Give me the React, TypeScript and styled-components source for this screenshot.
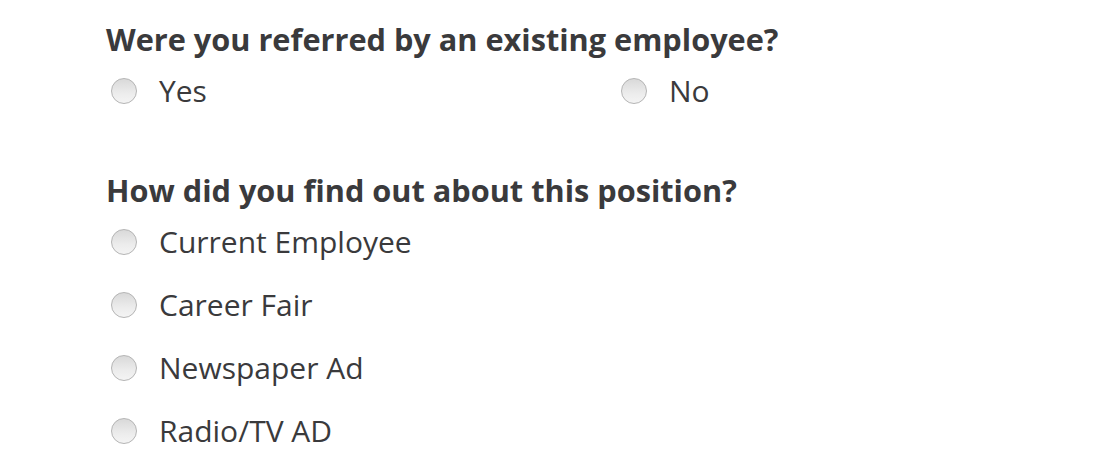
import styled, { createGlobalStyle } from "styled-components";

const GlobalStyle = createGlobalStyle`
  body {
    margin: 0;
    background: #fff;
    font-family: "Open Sans", "Noto Sans", sans-serif;
    color: #3a3a3c;
  }
`;

const referralOptions = ["Yes", "No"];
const sourceOptions = [
  "Current Employee",
  "Career Fair",
  "Newspaper Ad",
  "Radio/TV AD",
];

export default function App() {
  return (
    <>
      <GlobalStyle />
      <Form>
        <Question>
          <Heading>Were you referred by an existing employee?</Heading>
          <InlineOptions>
            {referralOptions.map((opt) => (
              <Option key={opt}>
                <Radio type="radio" name="referred" />
                <Label>{opt}</Label>
              </Option>
            ))}
          </InlineOptions>
        </Question>
        <Question>
          <Heading>How did you find out about this position?</Heading>
          <StackedOptions>
            {sourceOptions.map((opt) => (
              <Option key={opt}>
                <Radio type="radio" name="source" />
                <Label>{opt}</Label>
              </Option>
            ))}
          </StackedOptions>
        </Question>
      </Form>
    </>
  );
}

const Form = styled.form`
  display: flex;
  flex-direction: column;
  gap: 57px;
  padding: 19px 0 0 106px;
`;

const Question = styled.section`
  display: flex;
  flex-direction: column;
  gap: 10px;
`;

const Heading = styled.h2`
  margin: 0;
  font-size: 30.7px;
  line-height: 40px;
  font-weight: 700;
  color: #3a3a3c;
`;

const InlineOptions = styled.div`
  display: grid;
  grid-template-columns: 510px 510px;
`;

const StackedOptions = styled.div`
  display: flex;
  flex-direction: column;
  gap: 19px;
`;

const Option = styled.label`
  display: flex;
  align-items: center;
  height: 44px;
  padding-left: 5px;
  cursor: pointer;
`;

const Radio = styled.input`
  appearance: none;
  margin: 0;
  width: 26px;
  height: 26px;
  border-radius: 50%;
  border: 1px solid #b4b4b4;
  background: linear-gradient(180deg, #d9d9d9 0%, #ececec 60%, #f4f4f4 100%);
  flex-shrink: 0;
  cursor: pointer;
`;

const Label = styled.span`
  margin-left: 22px;
  font-size: 30px;
  line-height: 44px;
  color: #3a3a3c;
`;
